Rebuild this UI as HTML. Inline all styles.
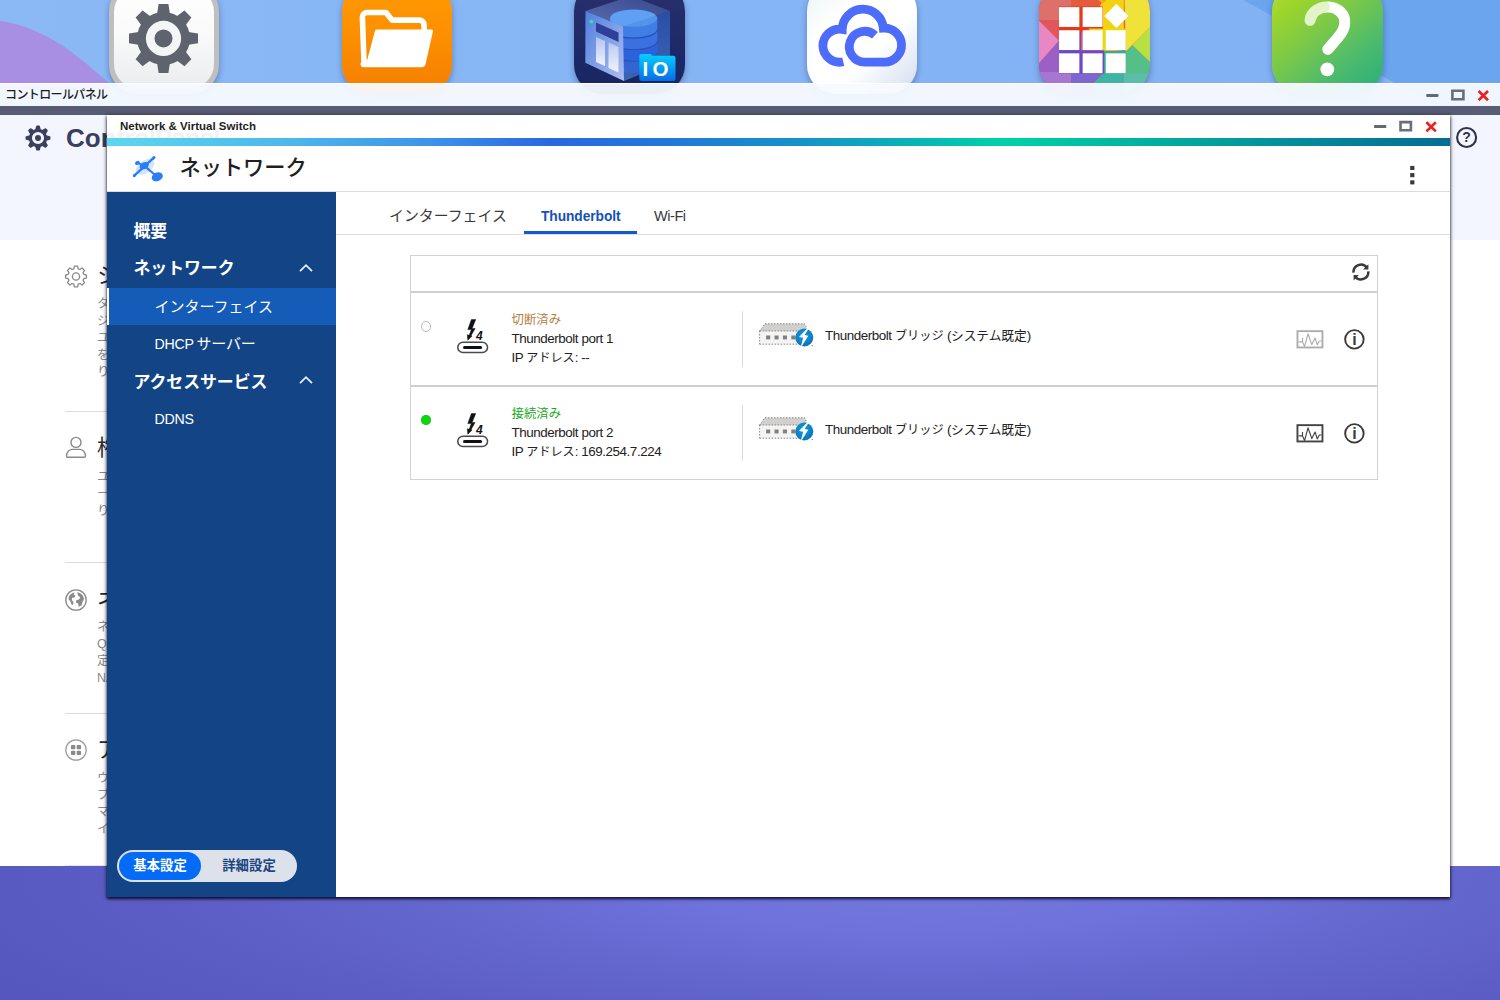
<!DOCTYPE html>
<html lang="ja">
<head>
<meta charset="utf-8">
<title>Network &amp; Virtual Switch</title>
<style>
*{box-sizing:border-box;margin:0;padding:0}
html,body{width:1500px;height:1000px;overflow:hidden}
body{position:relative;font-family:"Liberation Sans","Noto Sans CJK JP",sans-serif;font-size:13px;color:#222;background:#86b6f5}
.abs{position:absolute}
#desk{position:absolute;left:0;top:0;width:1500px;height:1000px;overflow:hidden;
 background:
  radial-gradient(ellipse 1050px 215px at 930px 880px,#7479df 0%,#6e72da 25%,#6467ce 48%,#5c5ec5 72%,#5657be 100%)}
#sky{position:absolute;left:0;top:0;width:1500px;height:120px;background:linear-gradient(90deg,#8bb9f6 0%,#86b5f5 45%,#82b2f4 80%,#84b4f5 100%)}
.app{position:absolute;top:-18px;width:110.5px;height:112px;border-radius:29px;overflow:hidden;box-shadow:0 3px 6px rgba(20,30,80,.35)}
.app svg{position:absolute;left:0;top:0}
/* control panel window */
#cp{position:absolute;left:0;top:83px;width:1500px;height:783px}
#cpbar{position:absolute;left:0;top:0;width:1500px;height:23px;background:rgba(247,250,255,.95);border-top:1px solid rgba(255,255,255,.9)}
#cpbar .t{position:absolute;left:5px;top:3px;font-size:12px;line-height:16px;color:#1c1c1c;font-weight:500;letter-spacing:-.62px}
#cpband{position:absolute;left:0;top:23px;width:1500px;height:9px;background:#575b73}
#cpbody{position:absolute;left:0;top:32px;width:1500px;height:751px;background:#fff}
#cphead{position:absolute;left:0;top:0;width:1500px;height:125px;background:#f3f6fe}
/* network window */
#nw{position:absolute;left:107px;top:115px;width:1343px;height:782px;box-shadow:0 1px 4px rgba(0,0,20,.85),0 2px 2px rgba(0,0,40,.5)}
#nwbar{position:absolute;left:0;top:0;width:1343px;height:23px;background:rgba(255,255,255,.93)}
#nwbar .t{position:absolute;left:13px;top:4px;font-size:11.5px;line-height:14px;font-weight:bold;color:#1f1f1f}
#nwgrad{position:absolute;left:0;top:23px;width:1343px;height:8px;background:linear-gradient(90deg,#5dd6ee 0%,#4cb6ec 14%,#3d93e8 24%,#2868e0 33%,#2279d8 42%,#1593c8 52%,#08b4b6 60%,#00d2a8 67%,#00a89e 80%,#04849a 91%,#066c94 100%)}
#nwhead{position:absolute;left:0;top:31px;width:1343px;height:46px;background:#fff;border-bottom:1px solid #dcdcdc}
#nwhead .t{position:absolute;left:72.500px;top:6.300px;font-size:21.200px;line-height:32px;color:#1f1f1f;font-weight:500}
#side{position:absolute;left:0;top:77px;width:229px;height:705px;background:#134586;color:#fff}
#main{position:absolute;left:229px;top:77px;width:1114px;height:705px;background:#fff}

.wbtn{position:absolute}
.cpsec{position:absolute;left:65px;width:1370px;height:151px;border-bottom:1px solid #dcdcdc}
.cpsec .ic{position:absolute;left:0;top:0}
.cpsec h3{position:absolute;left:32px;font-size:22px;line-height:30px;font-weight:400;color:#2a2a2a;white-space:nowrap}
.cpsec p{position:absolute;left:32px;font-size:12.5px;line-height:17px;color:#8a8a8a;width:300px}
#cptitle{position:absolute;left:66px;top:5px;font-size:26px;line-height:36px;font-weight:bold;color:#3b3e5e;white-space:nowrap}

#side .it{position:absolute;left:0;width:229px;white-space:nowrap;color:#fff}
#side .h1{left:26.500px;font-size:16.900px;line-height:24px;font-weight:bold;letter-spacing:-.05px}
#side .h2{left:47.600px;font-size:15px;line-height:22px;font-weight:400;letter-spacing:-.05px}
#side .la{font-size:14.2px;letter-spacing:-.25px}
#side .sel{position:absolute;left:0;top:96px;width:229px;height:37px;background:#155cb8;border-left:2px solid #fff}
#side .chev{position:absolute;left:191px}
#mode{position:absolute;left:10px;top:658px;width:180px;height:32px;border-radius:16px;background:#dde2ea}
#mode .on{position:absolute;left:2px;top:2px;width:82px;height:28px;border-radius:14px;background:#036bf7;color:#fff;font-weight:bold;font-size:13.4px;line-height:27px;text-align:center}
#mode .off{position:absolute;left:92px;top:2px;width:80px;height:28px;color:#1c4583;font-weight:bold;font-size:13.4px;line-height:27px;text-align:center}
#tabs{position:absolute;left:0;top:0;width:1114px;height:43px;border-bottom:1px solid #dedede}
#tabs .tab{position:absolute;top:12.800px;font-size:14.900px;line-height:22px;color:#3a3a3a;white-space:nowrap}
#tabs .act{color:#1450b8;font-weight:bold;font-size:15px;transform:scaleX(.915);transform-origin:0 0;letter-spacing:-.05px}
#tabs .ul{position:absolute;left:188px;top:39px;width:113px;height:3px;background:#1457d0}
#tbl{position:absolute;left:74px;top:63px;width:968px;height:225px;border:1px solid #d2d2d2}
#tbl .bar{position:absolute;left:0;top:0;width:966px;height:37px;border-bottom:2px solid #cfcfcf}
#tbl .row{position:absolute;left:0;width:966px;height:93px}
#tbl .r1{top:37px;border-bottom:2px solid #cfcfcf;height:94px}
#tbl .r2{top:131px;height:92px}
.row .st{position:absolute;left:10.300px;top:28.900px;width:10.600px;height:10.600px;border-radius:50%}
.row .txt{position:absolute;left:101px;top:18.600px;font-size:13.400px;line-height:18.800px;color:#222;white-space:nowrap;letter-spacing:-.44px}
.k{font-size:12.100px;letter-spacing:0}
.row .txt .s{font-size:12.400px;letter-spacing:0;position:relative;top:-.2px}
.row .vd{position:absolute;left:331.500px;top:18px;width:1px;height:56px;background:#dcdcdc}
.row .br{position:absolute;left:414.500px;top:34.500px;font-size:13.400px;line-height:18px;color:#222;white-space:nowrap;letter-spacing:-.44px}
.row>*,.bar>*{margin-left:-.5px;margin-top:-.5px}
</style>
</head>
<body>
<div id="desk">
 <div id="sky"></div>
 <svg class="abs" style="left:1200px;top:0" width="300" height="120" viewBox="1200 0 300 120"><path d="M1243 0H1500V120H1463Z" fill="#6aa5ee"/></svg>
 <svg class="abs" style="left:0;top:0" width="130" height="90" viewBox="0 0 130 90"><path d="M0 21C24 24 50 36 70 51C86 63 98 73 110 84V90H0Z" fill="#a88fe3"/></svg>

 <!-- app: control panel gear -->
 <div class="app" style="left:108.8px;background:#bfbfbf">
  <svg width="112" height="112" viewBox="0 0 112 112" style="left:-.8px">
   <defs><linearGradient id="gA" x1="0" y1="0" x2="0" y2="1"><stop offset="0" stop-color="#ffffff"/><stop offset=".45" stop-color="#fafafa"/><stop offset="1" stop-color="#e9ecee"/></linearGradient></defs>
   <rect x="6" y="5.5" width="100" height="101" rx="24.5" fill="url(#gA)"/>
   <g fill="#5f636d">
    <circle cx="55.5" cy="56.4" r="26.5"/>
    <g id="tooth"><path d="M48.9 33 L50.6 21.9 H60.4 L62.1 33Z"/></g>
    <use href="#tooth" transform="rotate(45 55.5 56.4)"/>
    <use href="#tooth" transform="rotate(90 55.5 56.4)"/>
    <use href="#tooth" transform="rotate(135 55.5 56.4)"/>
    <use href="#tooth" transform="rotate(180 55.5 56.4)"/>
    <use href="#tooth" transform="rotate(225 55.5 56.4)"/>
    <use href="#tooth" transform="rotate(270 55.5 56.4)"/>
    <use href="#tooth" transform="rotate(315 55.5 56.4)"/>
   </g>
   <circle cx="55.5" cy="56.4" r="17.6" fill="#f4f5f6"/>
   <circle cx="55.5" cy="56.4" r="9" fill="#5f636d"/>
  </svg>
 </div>

 <!-- app: file station -->
 <div class="app" style="left:341.5px;background:linear-gradient(180deg,#ff9a02 0%,#fd9000 45%,#f57e00 100%)">
  <svg width="112" height="112" viewBox="0 0 112 112" style="left:-0.5px">
   <path d="M23 80 L21.4 35.2 a4.6 4.6 0 0 1 4.6-4.7 H45 l6 7.6 H78.3 a4.6 4.6 0 0 1 4.6 4.4 L83.4 49" fill="none" stroke="#fff" stroke-width="5.6" stroke-linejoin="round"/>
   <path d="M35.5 49 H90.5 L83.2 81.5 a3 3 0 0 1 -3 2.2 H23 a2 2 0 0 1 -2 -2 L27.5 79Z" fill="#fff" stroke="#fff" stroke-width="3" stroke-linejoin="round"/>
  </svg>
 </div>

 <!-- app: storage -->
 <div class="app" style="left:574px;background:linear-gradient(180deg,#2a2f6c 0%,#1f2b68 50%,#172463 100%)">
  <svg width="112" height="112" viewBox="0 0 112 112" style="left:-1px">
   <defs>
    <linearGradient id="sF" x1="0" y1="0" x2="1" y2="1"><stop offset="0" stop-color="#4e7fe0"/><stop offset=".5" stop-color="#7f9fe6"/><stop offset="1" stop-color="#aebef0"/></linearGradient>
    <linearGradient id="sR" x1="0" y1="0" x2="0" y2="1"><stop offset="0" stop-color="#2a4ea8"/><stop offset="1" stop-color="#3a66b4"/></linearGradient>
    <linearGradient id="sT" x1="0" y1="1" x2="1" y2="0"><stop offset="0" stop-color="#5a6cae"/><stop offset="1" stop-color="#36468c"/></linearGradient>
    <linearGradient id="sD" x1="0" y1="0" x2="0" y2="1"><stop offset="0" stop-color="#e3e8fb" stop-opacity=".55"/><stop offset="1" stop-color="#f0f3ff"/></linearGradient>
    <linearGradient id="sIO" x1="0" y1="0" x2="0" y2="1"><stop offset="0" stop-color="#00d2ff"/><stop offset="1" stop-color="#0b6ae6"/></linearGradient>
   </defs>
   <!-- top face -->
   <path d="M12.5 29 L58 14 L97 29 L50 44.5Z" fill="url(#sT)"/>
   <!-- right face (translucent) -->
   <path d="M50 44.5 L97 29 V80 L51 99Z" fill="url(#sR)"/>
   <!-- cylinder -->
   <path d="M37 36 V82 a23.6 8.5 0 0 0 47.2 0 V36Z" fill="#3a68d8"/>
   <path d="M37 36 V47 a23.6 8.5 0 0 0 47.2 0 V36Z" fill="#4585ee"/>
   <path d="M37 48.5 V58.5 a23.6 8.5 0 0 0 47.2 0 V48.5 a23.6 8.5 0 0 1 -47.2 0Z" fill="#3f76ea"/>
   <path d="M37 60 V70 a23.6 8.5 0 0 0 47.2 0 V60 a23.6 8.5 0 0 1 -47.2 0Z" fill="#2d66e6"/>
   <path d="M37 71.5 V82 a23.6 8.5 0 0 0 47.2 0 V71.5 a23.6 8.5 0 0 1 -47.2 0Z" fill="#3568d6"/>
   <g fill="none" stroke="#1d3c9c" stroke-opacity=".55" stroke-width="1.1"><path d="M37 47.6 a23.6 8.5 0 0 0 47.2 0"/><path d="M37 59.2 a23.6 8.5 0 0 0 47.2 0"/><path d="M37 70.8 a23.6 8.5 0 0 0 47.2 0"/></g>
   <ellipse cx="60.6" cy="36.2" rx="23.6" ry="8.6" fill="#5fa0f4"/>
   <path d="M50 44.5 L84 33.2 V80 L58 95 L50 80Z" fill="#2f57b8" opacity=".18"/>
   <!-- front face -->
   <path d="M12.5 29 L50 44.5 L51 99 L12.3 80.7Z" fill="url(#sF)"/>
   <path d="M23 40.5 L45.5 50.5 V60 L23 49.5Z" fill="#2f3f96"/>
   <path d="M23 55 L32 59 V84 L23 80Z" fill="url(#sD)"/>
   <path d="M35.5 60.5 L45.5 65 V90.5 L35.5 86Z" fill="url(#sD)"/>
   <circle cx="18.4" cy="39.6" r="1.9" fill="#2fe6a0"/>
   <!-- IO folder -->
   <path d="M66.3 74 a2 2 0 0 1 2-2 h8.8 a2 2 0 0 1 2 1.8 h21.4 a2 2 0 0 1 2 2 V97 a2 2 0 0 1 -2 2 H68.3 a2 2 0 0 1 -2-2Z" fill="url(#sIO)"/>
   <text x="69.600" y="93.900" font-family="Liberation Sans, sans-serif" font-weight="bold" font-size="20.500" letter-spacing="4.300" fill="#fff">IO</text>
  </svg>
 </div>

 <!-- app: myQNAPcloud -->
 <div class="app" style="left:806.7px;background:linear-gradient(135deg,#eaf4f6 0%,#ffffff 30%,#ffffff 62%,#dfe7f3 88%,#c9d6ea 100%)">
  <svg width="112" height="112" viewBox="0 0 112 112" style="left:-0.7px">
   <path d="M37.3 79.7 A16.5 16.5 0 1 1 36.2 47.4 A20.6 20.6 0 0 1 77.33 46.09 A17.05 17.05 0 1 1 78.55 80.15 H58.75 A15.4 15.4 0 1 1 69 53.3" fill="none" stroke="#4d6cfa" stroke-width="8.8" stroke-linejoin="miter"/>
  </svg>
 </div>

 <!-- app: app center -->
 <div class="app" style="left:1039.3px;background:#e0565a">
  <svg width="112" height="112" viewBox="0 0 112 112" style="left:-.3px">
   <g transform="translate(-24 18) scale(.11)">
    <rect x="200" y="-180" width="320" height="365" fill="#de706b"/>
    <path d="M510 -180H800L790 20L670 260H510Z" fill="#e55b3d"/>
    <path d="M200 185H600V330L400 370L220 190Z" fill="#e0565a"/>
    <path d="M200 170L400 370L200 595Z" fill="#e887c3"/>
    <path d="M200 595L400 370V670H200Z" fill="#9c5fc6"/>
    <rect x="200" y="655" width="315" height="220" fill="#a577d3"/>
    <path d="M510 665H800L720 750V875H510Z" fill="#7e66cf"/>
    <path d="M800 665H990V875H720V750Z" fill="#3db4a4"/>
    <rect x="990" y="665" width="250" height="210" fill="#5abfaa"/>
    <path d="M1065 410L1240 575V665H1005V470Z" fill="#54bf89"/>
    <path d="M1240 235L1065 410L1240 575Z" fill="#b6e044"/>
    <path d="M990 -180H1240V235L1065 410L1005 470V340Z" fill="#efe238"/>
    <path d="M800 -180H990V340L1000 460H800L670 260L790 20Z" fill="#f4d212"/>
    <path d="M740 -20L800 -40L830 10L790 30Z" fill="#f7a81c"/>
    <!-- centre fills seen through gaps -->
    <path d="M400 60H800V260H670L600 300H400Z" fill="#e23a1c"/>
    <path d="M400 300L600 300V460H810V670H400Z" fill="#6b49c8"/>
    <path d="M800 260H1005V350Q1010 440 900 460H810Z" fill="#e8d912"/>
    <path d="M810 462Q900 475 1005 455V670H810Z" fill="#2fae9c"/>
    <g fill="#fff">
     <rect x="400" y="65" width="185" height="180"/><rect x="615" y="65" width="181" height="180"/>
     <rect x="400" y="275" width="185" height="180"/><rect x="615" y="275" width="181" height="180"/><rect x="825" y="275" width="181" height="180"/>
     <rect x="400" y="485" width="185" height="180"/><rect x="615" y="485" width="181" height="180"/><rect x="825" y="485" width="181" height="180"/>
     <path d="M922 35L1032 145L922 255L812 145Z"/>
    </g>
   </g>
  </svg>
 </div>

 <!-- app: help center -->
 <div class="app" style="left:1272px;background:linear-gradient(140deg,#b4e634 0%,#9ed52a 18%,#78c84a 45%,#4dbb6c 70%,#27ad7f 100%)">
  <svg width="112" height="112" viewBox="0 0 112 112">
   <defs><linearGradient id="hQ" x1="38" y1="40" x2="62" y2="26" gradientUnits="userSpaceOnUse"><stop offset="0" stop-color="#fff" stop-opacity=".72"/><stop offset=".6" stop-color="#fff" stop-opacity=".85"/><stop offset="1" stop-color="#fff"/></linearGradient></defs>
   <path d="M38.1 38.3 A17.3 14.6 0 0 1 72.7 40.8 Q72.7 47.8 66.5 54.8 L55.8 67.4" fill="none" stroke="#fff" stroke-width="11" stroke-linecap="round" stroke-linejoin="round"/>
   <path d="M38.1 38.3 A17.3 14.6 0 0 1 52.5 24.8" fill="none" stroke="#9fd63f" stroke-opacity=".28" stroke-width="11" stroke-linecap="round"/>
   <circle cx="55.3" cy="87.3" r="6.9" fill="#fff"/>
  </svg>
 </div>
</div>

<div id="cp">
 <div id="cpbar"><div class="t">コントロールパネル</div>
  <svg class="wbtn" style="left:1420px;top:-1px" width="80" height="23" viewBox="1420 83 80 23">
   <rect x="1426.2" y="93.9" width="12.3" height="3" rx=".8" fill="#626874"/>
   <path d="M1452.4 90.7H1463.4V99.2H1452.4Z" fill="none" stroke="#686e7a" stroke-width="2.6"/>
   <path d="M1478.6 91L1488 100.2M1488 91L1478.6 100.2" stroke="#e8221d" stroke-width="2.7" fill="none"/>
  </svg>
 </div>
 <div id="cpband"></div>
 <div id="cpbody">
  <div id="cphead">
   <svg class="abs" style="left:24.2px;top:8.6px" width="28" height="28" viewBox="0 0 28 28">
    <g fill="#3d3f5e" stroke="#3d3f5e" stroke-width="1.5" stroke-linejoin="round">
     <g id="t2"><path d="M11.9 6 L12.9 2.3 H15.1 L16.1 6Z"/></g>
     <use href="#t2" transform="rotate(45 14 14)"/><use href="#t2" transform="rotate(90 14 14)"/><use href="#t2" transform="rotate(135 14 14)"/>
     <use href="#t2" transform="rotate(180 14 14)"/><use href="#t2" transform="rotate(225 14 14)"/><use href="#t2" transform="rotate(270 14 14)"/><use href="#t2" transform="rotate(315 14 14)"/>
    </g>
    <circle cx="14" cy="14" r="7.6" fill="none" stroke="#3d3f5e" stroke-width="3.1"/>
    <circle cx="14" cy="14" r="3" fill="#3d3f5e"/>
   </svg>
   <div id="cptitle">Con<span style="letter-spacing:-.9px">trolPanel</span></div>
   <svg class="abs" style="left:1454px;top:10px" width="26" height="26" viewBox="0 0 26 26">
    <circle cx="12.6" cy="12.5" r="9.5" fill="none" stroke="#2f3345" stroke-width="2.1"/>
    <text x="12.6" y="17.4" text-anchor="middle" font-family="Liberation Sans, sans-serif" font-weight="bold" font-size="14" fill="#2f3345">?</text>
   </svg>
  </div>

  <div class="cpsec" style="top:125px;height:172px">
   <svg class="ic" style="left:-1px;top:24px" width="24" height="24" viewBox="0 0 24 24"><path fill="none" stroke="#8a8a8a" stroke-width="1.3" stroke-linejoin="round" d="M10.3 2.2h3.4l.5 2.6 1.7.7 2.2-1.5 2.4 2.4-1.5 2.2.7 1.7 2.6.5v3.4l-2.6.5-.7 1.7 1.5 2.2-2.4 2.4-2.2-1.5-1.7.7-.5 2.6h-3.4l-.5-2.6-1.7-.7-2.2 1.5-2.4-2.4 1.5-2.2-.7-1.7-2.6-.5v-3.4l2.6-.5.7-1.7-1.5-2.2 2.4-2.4 2.2 1.5 1.7-.7z"/><circle cx="12" cy="12.5" r="3.6" fill="none" stroke="#8a8a8a" stroke-width="1.3"/></svg>
   <h3 style="top:21px">システム</h3>
   <p style="top:56px">タイムゾーンや言語設定の変更、スト<br>ジ容量の管理、外部デバイスの管理、<br>ユーザーへの通知、セキュリティ保護<br>を有効化、ファームウェアの更新、よ<br>り良い設定の復元ができます。</p>
  </div>
  <div class="cpsec" style="top:297px">
   <svg class="ic" style="left:-2px;top:22px" width="26" height="26" viewBox="0 0 26 26"><circle cx="13" cy="8.4" r="5" fill="none" stroke="#8a8a8a" stroke-width="1.4"/><path d="M3.6 21.6c0-4 3-6.2 6-6.2h6.8c3 0 6 2.200 6 6.200v.6a1 1 0 0 1-1 1H4.600a1 1 0 0 1-1-1z" fill="none" stroke="#8a8a8a" stroke-width="1.4"/></svg>
   <h3 style="top:21px">権限設定</h3>
   <p style="top:57px">ユーザー、ユーザーグループの作成、<br>ーザーのアクセス権限の設定、<br>り当ての管理ができます。</p>
  </div>
  <div class="cpsec" style="top:448px">
   <svg class="ic" style="left:-1.200px;top:24.500px" width="24" height="24" viewBox="0 0 24 24"><circle cx="12" cy="12" r="10.2" fill="#fff" stroke="#8a8a8a" stroke-width="1.3"/><path fill="#8a8a8a" d="M5 8.500c1.500-2.500 3.500-3.800 5.500-4l-.8 2.200 1.800.8-1 2-2.200.3-.6 2.400 1.800 1.600-.5 3.200-1.600-.8-1-3-1.800-1.600zM13 4.300c2.600.2 5 1.700 6.200 4.200l.8 2.500-1.500 3-1 3.600-2.800 1.200-.6-3.200-2.200-1 .4-2.400 2.600-.8 1.400-2-2-1.600z"/></svg>
   <h3 style="top:22px">ネットワークサービスとファイルサービス</h3>
   <p style="top:56px">ネットワーク接続の管理、<br>QNAP サービスへのアクセス設定、<br>定義済みのプロトコルの有効化、<br>NAS のごみ箱の構成ができます。</p>
  </div>
  <div class="cpsec" style="top:599px;height:152px;border-bottom:1px solid #e6e6e6">
   <svg class="ic" style="left:-1.200px;top:23.500px" width="24" height="24" viewBox="0 0 24 24"><circle cx="12" cy="12" r="10.2" fill="#fff" stroke="#9a9a9a" stroke-width="1.2"/><g fill="#8a8a8a"><rect x="7" y="7" width="4.300" height="4.300" rx=".8"/><rect x="12.700" y="7" width="4.300" height="4.300" rx=".8"/><rect x="7" y="12.700" width="4.300" height="4.300" rx=".8"/><rect x="12.700" y="12.700" width="4.300" height="4.300" rx=".8"/></g></svg>
   <h3 style="top:21px">アプリケーション</h3>
   <p style="top:55.500px">ウェブサーバーや SQL サーバー、<br>ブラウザベースのアプリケーション、<br>マルチメディア管理、<br>インデックス作成ができます。</p>
  </div>
 </div>
</div>

<div id="nw">
 <div id="nwbar"><div class="t">Network &amp; Virtual Switch</div>
  <svg class="wbtn" style="left:1260px;top:0" width="83" height="23" viewBox="1367 115 83 23">
   <rect x="1374" y="125" width="12.300" height="3" rx=".8" fill="#626874"/>
   <path d="M1400.500 122.100H1410.900V130.200H1400.500Z" fill="none" stroke="#686e7a" stroke-width="2.600"/>
   <path d="M1426.400 122.300L1435.800 131.400M1435.800 122.300L1426.400 131.400" stroke="#e8221d" stroke-width="2.700" fill="none"/>
  </svg>
 </div>
 <div id="nwgrad"></div>
 <div id="nwhead">
  <svg class="abs" style="left:24px;top:8px" width="32" height="30" viewBox="131 154 32 30">
   <ellipse cx="145" cy="166.800" rx="10.500" ry="6.300" transform="rotate(-35 145 166.800)" fill="#d3e5fc"/>
   <path d="M134.300 175.700L153.900 157.700" stroke="#2b7cf7" stroke-width="2.300" stroke-linecap="round" fill="none"/>
   <path d="M144 165.700L157 176.500" stroke="#2b7cf7" stroke-width="2.200" fill="none"/>
   <ellipse cx="134.600" cy="175.400" rx="2" ry="1.400" transform="rotate(-42 134.600 175.400)" fill="#2b7cf7"/>
   <ellipse cx="153.500" cy="158" rx="2.300" ry="1.500" transform="rotate(-42 153.500 158)" fill="#2b7cf7"/>
   <ellipse cx="137.400" cy="162.900" rx="2.500" ry="1.800" transform="rotate(-30 137.400 162.900)" fill="#2b7cf7"/>
   <path d="M137.400 162.900L144 165.700" stroke="#2b7cf7" stroke-width="1.900" fill="none"/>
   <ellipse cx="144.200" cy="165.700" rx="4.900" ry="3.400" transform="rotate(-28 144.200 165.700)" fill="#2b7cf7"/>
   <ellipse cx="157.300" cy="176.800" rx="5.700" ry="4.300" transform="rotate(-22 157.300 176.800)" fill="#2b7cf7"/>
  </svg>
  <div class="t">ネットワーク</div>
  <svg class="abs" style="left:1301px;top:19px" width="8" height="20" viewBox="0 0 8 20"><g fill="#3a3a3a"><rect x="2.200" y=".9" width="4.200" height="4.100"/><rect x="2.200" y="8.100" width="4.200" height="4.100"/><rect x="2.200" y="15.300" width="4.200" height="4.100"/></g></svg>
 </div>
 <div id="side">
  <div class="it h1" style="top:27.800px">概要</div>
  <div class="it h1" style="top:65px">ネットワーク</div>
  <svg class="chev" style="top:70.500px" width="16" height="10" viewBox="0 0 16 10"><path d="M2 8.200L8 2.200L14 8.200" fill="none" stroke="#e8eef8" stroke-width="1.800"/></svg>
  <div class="sel"></div>
  <div class="it h2" style="top:103.600px">インターフェイス</div>
  <div class="it h2" style="top:141px;word-spacing:-1.2px;letter-spacing:-.2px"><span class="la">DHCP</span> サーバー</div>
  <div class="it h1" style="top:179.200px">アクセスサービス</div>
  <svg class="chev" style="top:183px" width="16" height="10" viewBox="0 0 16 10"><path d="M2 8.200L8 2.200L14 8.200" fill="none" stroke="#e8eef8" stroke-width="1.800"/></svg>
  <div class="it h2" style="top:216px"><span class="la">DDNS</span></div>
  <div id="mode"><div class="on">基本設定</div><div class="off">詳細設定</div></div>
 </div>
 <div id="main">
  <div id="tabs">
   <div class="tab" style="left:53px">インターフェイス</div>
   <div class="tab act" style="left:205px">Thunderbolt</div>
   <div class="tab" style="left:318px;font-size:14.500px;letter-spacing:-.45px">Wi-Fi</div>
   <div class="ul"></div>
  </div>
  <div id="tbl">
   <div class="bar">
    <svg class="abs" style="left:941px;top:7.500px" width="20" height="20" viewBox="0 0 20 20"><g fill="none" stroke="#3a3a3a" stroke-width="2.500"><path d="M1.500 9.700A7.400 7.400 0 0 1 14.900 4.800"/><path d="M16.300 8.300A7.400 7.400 0 0 1 2.900 13.200"/></g><path d="M16.400 1.200V6.600H11.100Z" fill="#3a3a3a"/><path d="M1.600 12V17.500L6.800 12Z" fill="#3a3a3a"/></svg>
   </div>
   <div class="row r1">
    <div class="st" style="border:1.100px solid #bcbcbc;background:#fff"></div>
    <svg class="abs" style="left:44px;top:24px" width="36" height="38" viewBox="0 0 36 38"><use href="#tb4"/></svg>
    <div class="txt"><span class="s" style="color:#b3813f">切断済み</span><br>Thunderbolt port 1<br>IP <span class="k">アドレス</span>: --</div>
    <div class="vd"></div>
    <svg class="abs" style="left:347px;top:28px" width="58" height="28" viewBox="0 0 58 28"><use href="#brg"/></svg>
    <div class="br">Thunderbolt <span class="k" style="font-size:12.200px">ブリッジ</span> (<span class="k" style="font-size:12.700px">システム既定</span>)</div>
    <svg class="abs" style="left:885.500px;top:36px" width="28" height="20" viewBox="0 0 28 20" color="#adadad"><use href="#cht"/></svg>
    <svg class="abs" style="left:932.600px;top:34px" width="24" height="24" viewBox="0 0 24 24"><use href="#inf"/></svg>
   </div>
   <div class="row r2">
    <div class="st" style="background:#05dc05;width:10px;height:10px;left:10.450px;top:28.900px;box-shadow:inset 0 0 0 .7px rgba(70,165,70,.75)"></div>
    <svg class="abs" style="left:44px;top:24px" width="36" height="38" viewBox="0 0 36 38"><use href="#tb4"/></svg>
    <div class="txt"><span class="s" style="color:#22a822">接続済み</span><br>Thunderbolt port 2<br>IP <span class="k">アドレス</span>: 169.254.7.224</div>
    <div class="vd"></div>
    <svg class="abs" style="left:347px;top:28px" width="58" height="28" viewBox="0 0 58 28"><use href="#brg"/></svg>
    <div class="br">Thunderbolt <span class="k" style="font-size:12.200px">ブリッジ</span> (<span class="k" style="font-size:12.700px">システム既定</span>)</div>
    <svg class="abs" style="left:885.500px;top:36px" width="28" height="20" viewBox="0 0 28 20" color="#444"><use href="#cht"/></svg>
    <svg class="abs" style="left:932.600px;top:34px" width="24" height="24" viewBox="0 0 24 24"><use href="#inf"/></svg>
   </div>
  </div>
 </div>
</div>

<svg width="0" height="0" style="position:absolute">
 <defs>
  <g id="tb4">
   <path d="M16.400 2.600H20.700L17.100 11.400H20.100L16.100 18.500L17.100 19.100L12.800 23.200L12.300 17.700L14.200 18.300L16.400 12.600H12.800Z" fill="#111" stroke="#111" stroke-width=".5" stroke-linejoin="round"/>
   <text x="21" y="22.700" font-family="Liberation Sans, sans-serif" font-weight="bold" font-style="italic" font-size="12" fill="#111">4</text>
   <rect x="2.750" y="25.150" width="29.800" height="10.400" rx="5.200" fill="none" stroke="#4a4a4a" stroke-width="1.550"/>
   <rect x="8" y="29" width="19.100" height="3" rx="1.500" fill="#111"/>
  </g>
  <g id="brg">
   <path d="M1.600 10L6.900 2.800H46.700L49.100 10Z" fill="#d2d0ce"/>
   <path d="M1.600 10H49V23.200H1.600Z" fill="#f4f4f4"/>
   <path d="M1.600 10H49M1.600 23.200H44M1.600 10V23.200M1.600 10L6.900 2.800H46.700L49.100 8" fill="none" stroke="#7c7c7c" stroke-width=".9" stroke-dasharray="1.500 1.500"/>
   <g fill="#808080"><rect x="8.100" y="14.500" width="4.100" height="3.900"/><rect x="16.500" y="14.500" width="4.100" height="3.900"/><rect x="24.900" y="14.500" width="4.100" height="3.900"/><rect x="33.300" y="14.500" width="4.100" height="3.900"/></g>
   <circle cx="46.300" cy="16.500" r="9" fill="url(#tbG)"/>
   <path d="M50.350 6.300L41 16L45.200 16.800L42.300 27.500L50.300 14.700L46.600 14L51 7.200Z" fill="#fff"/>
   <circle cx="54.300" cy="24.600" r=".7" fill="#2a8fd0"/>
  </g>
  <radialGradient id="tbG" cx=".45" cy=".4" r=".65"><stop offset="0" stop-color="#1a9bdc"/><stop offset=".6" stop-color="#0c84c8"/><stop offset="1" stop-color="#0a6eae"/></radialGradient>
  <g id="cht">
   <rect x="1.450" y="2.150" width="25" height="16.300" fill="none" stroke="currentColor" stroke-width="1.900"/>
   <path d="M2.600 12.900H6.500M6.500 9V12.900L8.600 17.400L12 4.800L15.800 15.600L19.100 9L21.200 15.900L23.300 12H25.400" fill="none" stroke="currentColor" stroke-width="1.150" stroke-linejoin="round"/>
  </g>
  <g id="inf">
   <circle cx="11.400" cy="12.400" r="9.250" fill="none" stroke="#3a3a3a" stroke-width="1.900"/>
   <text x="11.400" y="18.200" text-anchor="middle" font-family="Liberation Sans, sans-serif" font-weight="bold" font-size="16" fill="#3a3a3a">i</text>
  </g>
 </defs>
</svg>
</body>
</html>
